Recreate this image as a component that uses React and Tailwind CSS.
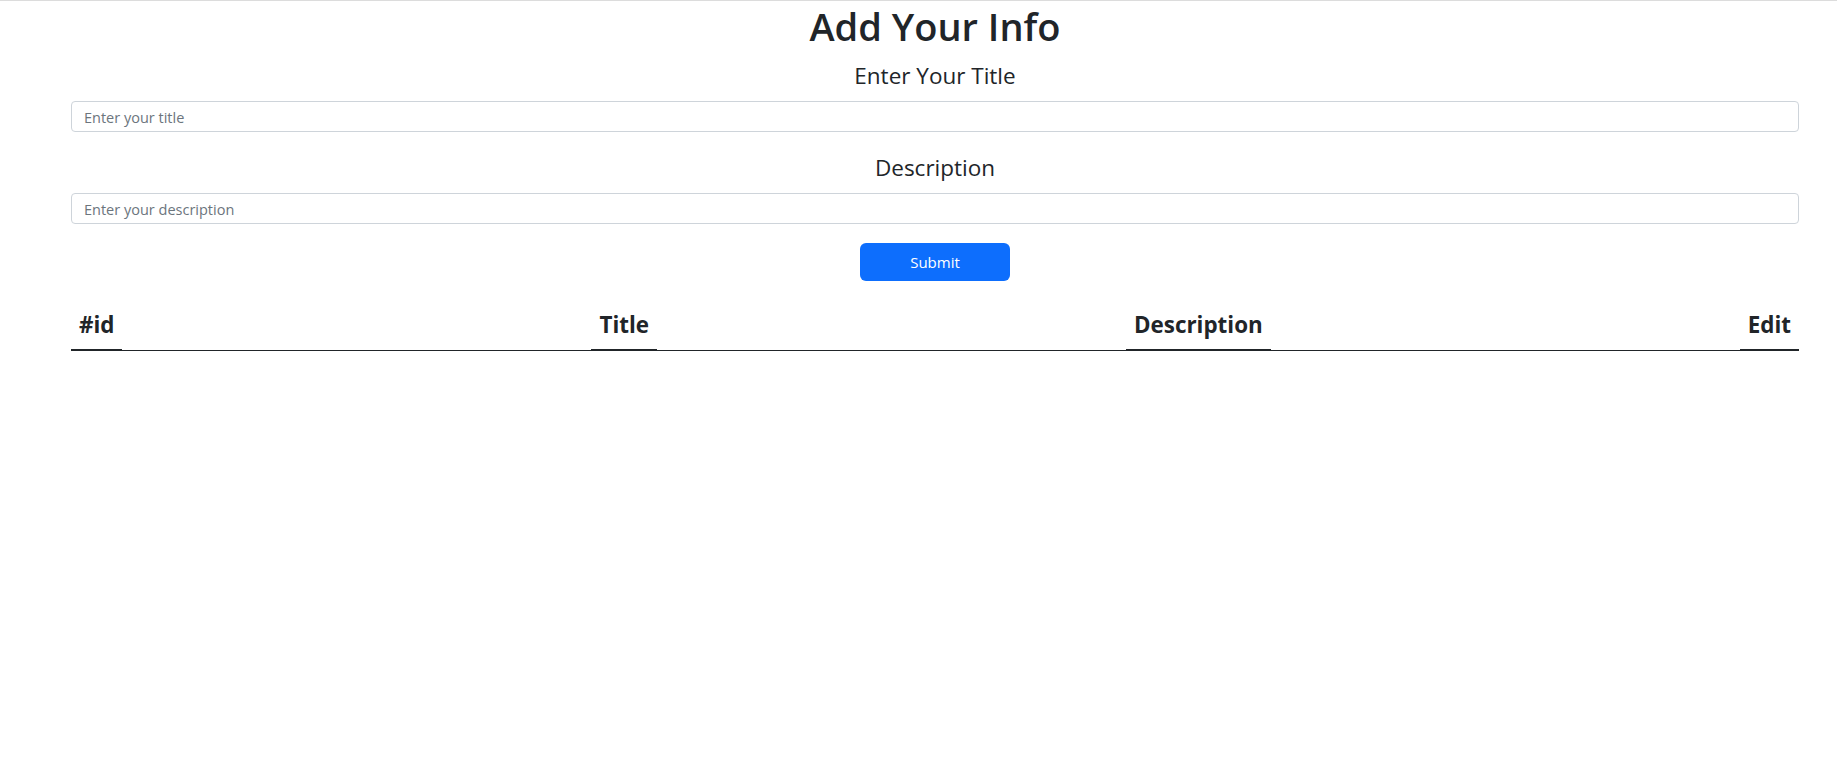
import React from 'react';

const headers = ['#id', 'Title', 'Description', 'Edit'];

const App = () => {
  return (
    <div className="min-h-[770px] bg-white border-t border-[#dcdcdc] text-[#212529] font-['Open_Sans',sans-serif]">
      <div className="ml-[71px] w-[1728px] text-center">
        <h1 className="pt-px text-[38px] leading-[48px] font-semibold mb-[7px]">Add Your Info</h1>

        <label className="block pt-px text-[22.5px] leading-[36px] mb-[7px]">Enter Your Title</label>
        <input
          type="text"
          placeholder="Enter your title"
          className="block w-full h-[31px] px-3 pt-[5px] pb-[3px] text-[14.5px] leading-[21px] border border-[#ced4da] rounded-[4px] placeholder:text-[#6c757d] outline-none"
        />

        <label className="block mt-[17px] pt-px text-[22.5px] leading-[36px] mb-[7px]">Description</label>
        <input
          type="text"
          placeholder="Enter your description"
          className="block w-full h-[31px] px-3 pt-[5px] pb-[3px] text-[14.5px] leading-[21px] border border-[#ced4da] rounded-[4px] placeholder:text-[#6c757d] outline-none"
        />

        <button className="mt-[19px] w-[150px] h-[38px] rounded-[6px] bg-[#0d6efd] text-white text-[15px] leading-[24px]">
          Submit
        </button>

        <div className="mt-4 border-b border-[#212529]">
          <div className="flex justify-between -mb-px">
            {headers.map((h) => (
              <div key={h} className="px-2 pt-[10px] pb-[6px] text-[22.4px] leading-[36px] font-bold border-b-2 border-[#212529]">
                {h}
              </div>
            ))}
          </div>
        </div>
      </div>
    </div>
  );
};

export default App;
